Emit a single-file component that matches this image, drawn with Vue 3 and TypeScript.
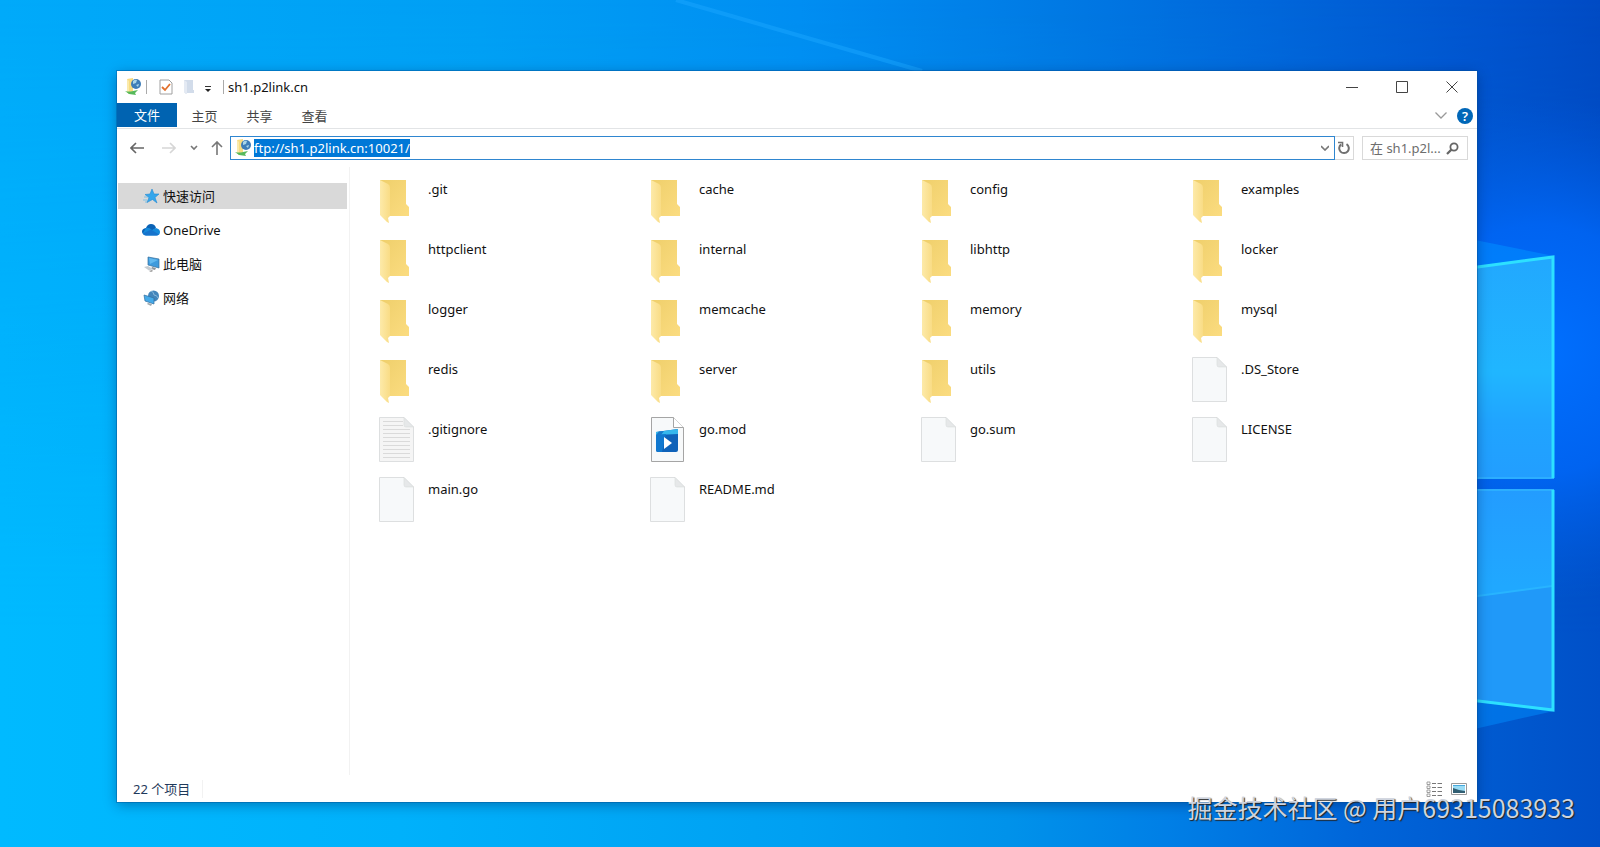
<script setup lang="ts">
import { onMounted, ref } from 'vue'

type Kind = 'folder' | 'file' | 'text' | 'video'
interface Entry {
  name: string
  kind: Kind
}

const folders = [
  '.git', 'cache', 'config', 'examples',
  'httpclient', 'internal', 'libhttp', 'locker',
  'logger', 'memcache', 'memory', 'mysql',
  'redis', 'server', 'utils',
]
const entries: Entry[] = [
  ...folders.map((name): Entry => ({ name, kind: 'folder' })),
  { name: '.DS_Store', kind: 'file' },
  { name: '.gitignore', kind: 'text' },
  { name: 'go.mod', kind: 'video' },
  { name: 'go.sum', kind: 'file' },
  { name: 'LICENSE', kind: 'file' },
  { name: 'main.go', kind: 'file' },
  { name: 'README.md', kind: 'file' },
]

const places = [
  { id: 'quick', label: '快速访问' },
  { id: 'cloud', label: 'OneDrive' },
  { id: 'pc', label: '此电脑' },
  { id: 'net', label: '网络' },
]
const activePlace = ref('quick')
const tabs = ['主页', '共享', '查看']
const address = ref('ftp://sh1.p2link.cn:10021/')
const query = ref('')
const addressBox = ref<HTMLInputElement | null>(null)

onMounted(() => {
  addressBox.value?.focus()
  addressBox.value?.select()
})
</script>

<template>
  <div class="desktop">
    <svg class="wallpaper" viewBox="0 0 1600 847" preserveAspectRatio="none" aria-hidden="true">
      <defs>
        <linearGradient id="skyTop" x1="0" y1="0" x2="1" y2="0">
          <stop offset="0" stop-color="#00aafa" />
          <stop offset="0.3" stop-color="#009ff4" />
          <stop offset="0.5" stop-color="#008ef2" />
          <stop offset="0.65" stop-color="#007be5" />
          <stop offset="0.8" stop-color="#0066da" />
          <stop offset="0.93" stop-color="#0054cf" />
          <stop offset="1" stop-color="#004bc4" />
        </linearGradient>
        <linearGradient id="skyLow" x1="0" y1="0" x2="1" y2="0">
          <stop offset="0" stop-color="#00baff" />
          <stop offset="0.25" stop-color="#00b1fb" />
          <stop offset="0.5" stop-color="#00a0f2" />
          <stop offset="0.63" stop-color="#0092ea" />
          <stop offset="0.73" stop-color="#007fe6" />
          <stop offset="0.85" stop-color="#0065d9" />
          <stop offset="1" stop-color="#0050c8" />
        </linearGradient>
        <linearGradient id="fade" x1="0" y1="0" x2="0" y2="1">
          <stop offset="0" stop-color="#000" />
          <stop offset="0.75" stop-color="#fff" />
        </linearGradient>
        <mask id="lowMask"><rect width="1600" height="847" fill="url(#fade)" /></mask>
        <radialGradient id="rightGlow" gradientUnits="userSpaceOnUse" cx="1540" cy="350" r="250">
          <stop offset="0" stop-color="#0070ff" />
          <stop offset="0.5" stop-color="#0068fa" stop-opacity="0.8" />
          <stop offset="1" stop-color="#0060e8" stop-opacity="0" />
        </radialGradient>
        <linearGradient id="paneTop" x1="0" y1="0" x2="0" y2="1">
          <stop offset="0" stop-color="#22a8fe" />
          <stop offset="0.52" stop-color="#20b6ff" />
          <stop offset="0.75" stop-color="#20a4ff" />
          <stop offset="1" stop-color="#229eff" />
        </linearGradient>
        <linearGradient id="paneLow" x1="0" y1="0" x2="0" y2="1">
          <stop offset="0" stop-color="#239cff" />
          <stop offset="0.44" stop-color="#20a8ff" />
          <stop offset="1" stop-color="#20a8ff" />
        </linearGradient>
        <linearGradient id="folderBack" x1="0" y1="0" x2="1" y2="1">
          <stop offset="0" stop-color="#efcf6b" />
          <stop offset="1" stop-color="#fbdc80" />
        </linearGradient>
        <linearGradient id="folderFront" x1="0" y1="0" x2="1" y2="0">
          <stop offset="0" stop-color="#fdeaa9" />
          <stop offset="1" stop-color="#f9dc85" />
        </linearGradient>
      </defs>
      <rect width="1600" height="847" fill="url(#skyTop)" />
      <rect width="1600" height="847" fill="url(#skyLow)" mask="url(#lowMask)" />
      <rect width="1600" height="847" fill="url(#rightGlow)" />
      <path d="M676 0 L922 71" stroke="#1ba6ff" stroke-width="4" opacity="0.5" />
      <path d="M1470 239 L1554 256 L1470 268Z" fill="#008cff" opacity="0.6" />
      <path d="M1470 700 L1554 711 L1470 730Z" fill="#0084f5" opacity="0.6" />
      <path d="M1470 268 L1554 257 V478 H1470Z" fill="url(#paneTop)" />
      <path d="M1470 489 H1554 V711 L1470 700Z" fill="url(#paneLow)" />
      <path d="M1470 597 L1554 586 V711 L1470 700Z" fill="#2099f9" />
      <path d="M1470 597 L1552 586" stroke="#28b4ff" stroke-width="2" />
      <path d="M1470 478 H1554 M1470 490 H1554" stroke="#2caeff" stroke-width="2" />
      <path d="M1470 268 L1553 257 V478 M1553 490 V710 L1470 700" fill="none" stroke="#2de0ff" stroke-width="3" />
    </svg>

    <main class="window">
      <header class="titlebar">
        <svg class="ftp-icon" viewBox="0 0 18 18" aria-hidden="true">
          <path d="M3 1 L9 0 V13 L5 16 L3 14Z" fill="#f7dc82" />
          <path d="M3 1 L5 3 V16 L3 14Z" fill="#fbeaab" />
          <path d="M1 13 Q5 14 9 13 L14 12 L11 15 L12 17 L5 16Z" fill="#57b95b" />
          <circle cx="12" cy="6" r="5" fill="#3d7db8" />
          <path d="M9 3 Q11 1 13 2 L12 5 L9 6Z M12 7 L15 6 L14 9Z" fill="#a8d5e8" />
        </svg>
        <span class="bar"></span>
        <button class="quick" type="button" aria-label="属性">
          <svg width="14" height="16" viewBox="0 0 14 16">
            <path d="M1 1 H10 L13 4 V15 H1Z" fill="#fff" stroke="#a0a0a0" />
            <path d="M3 8 L6 11 L11 5" fill="none" stroke="#e2702c" stroke-width="1.8" />
          </svg>
        </button>
        <button class="quick folder-quick" type="button" aria-label="新建文件夹">
          <svg width="10" height="14" viewBox="0 0 10 14">
            <path d="M0 0 H9 V10 H10 V13 H3 L2 14 L0 12Z" fill="#d2dcea" />
            <path d="M0 0 L3 2 V14 L0 12Z" fill="#e4eaf3" />
          </svg>
        </button>
        <button class="quick arrow-quick" type="button" aria-label="自定义快速访问工具栏">
          <svg width="8" height="8" viewBox="0 0 8 8"><path d="M1 1.500 H7" stroke="#333" /><path d="M1 4 H7 L4 7Z" fill="#222" /></svg>
        </button>
        <span class="bar title-bar-mark"></span>
        <h1 class="title">sh1.p2link.cn</h1>
        <div class="controls">
          <button type="button" aria-label="最小化"><svg viewBox="0 0 12 12"><path d="M0 6.500 H12" /></svg></button>
          <button type="button" aria-label="最大化"><svg viewBox="0 0 12 12"><path d="M.5 .5 H11.500 V11.500 H.5Z" /></svg></button>
          <button type="button" aria-label="关闭"><svg viewBox="0 0 12 12"><path d="M.5 .5 L11.500 11.500 M11.500 .5 L.5 11.500" /></svg></button>
        </div>
      </header>

      <nav class="ribbon" aria-label="功能区">
        <button class="file-tab" type="button">文件</button>
        <button v-for="tab in tabs" :key="tab" class="tab" type="button">{{ tab }}</button>
        <button class="expand" type="button" aria-label="展开功能区">
          <svg width="12" height="7" viewBox="0 0 12 7"><path d="M.5 .5 L6 6 L11.500 .5" fill="none" stroke="#999" stroke-width="1.3" /></svg>
        </button>
        <button class="help" type="button" aria-label="帮助">?</button>
      </nav>

      <div class="toolbar">
        <button class="nav" type="button" aria-label="后退">
          <svg width="14" height="12" viewBox="0 0 14 12"><path d="M14 6 H1 M6 1 L1 6 L6 11" stroke="#666" /></svg>
        </button>
        <button class="nav forward" type="button" aria-label="前进">
          <svg width="14" height="12" viewBox="0 0 14 12"><path d="M0 6 H13 M8 1 L13 6 L8 11" stroke="#d6d6d6" /></svg>
        </button>
        <button class="nav recent" type="button" aria-label="最近浏览的位置">
          <svg width="8" height="6" viewBox="0 0 8 6"><path d="M1 1 L4 4 L7 1" stroke="#777" /></svg>
        </button>
        <button class="nav" type="button" aria-label="上移">
          <svg width="12" height="14" viewBox="0 0 12 14"><path d="M6 14 V1 M1 6 L6 1 L11 6" stroke="#777" /></svg>
        </button>
        <div class="address">
          <svg class="ftp-icon" viewBox="0 0 18 18" aria-hidden="true">
            <path d="M3 1 L9 0 V13 L5 16 L3 14Z" fill="#f7dc82" />
            <path d="M3 1 L5 3 V16 L3 14Z" fill="#fbeaab" />
            <path d="M1 13 Q5 14 9 13 L14 12 L11 15 L12 17 L5 16Z" fill="#57b95b" />
            <circle cx="12" cy="6" r="5" fill="#3d7db8" />
            <path d="M9 3 Q11 1 13 2 L12 5 L9 6Z M12 7 L15 6 L14 9Z" fill="#a8d5e8" />
          </svg>
          <input ref="addressBox" v-model="address" type="text" aria-label="地址" spellcheck="false" />
          <button class="nav" type="button" aria-label="以前的位置">
            <svg width="8" height="6" viewBox="0 0 8 6"><path d="M0 1 L4 5 L8 1" stroke="#777" /></svg>
          </button>
        </div>
        <button class="refresh" type="button" aria-label="刷新">
          <svg width="12" height="14" viewBox="0 0 12 14">
            <path d="M8.500 3.200 A4.800 4.800 0 1 1 3.200 3.400" fill="none" stroke="#707070" stroke-width="2" />
            <path d="M0 1.500 H4.500 V6" fill="none" stroke="#707070" stroke-width="1.6" />
          </svg>
        </button>
        <label class="search">
          <input v-model="query" type="text" placeholder="在 sh1.p2l..." aria-label="搜索" />
          <svg width="13" height="13" viewBox="0 0 13 13" aria-hidden="true">
            <circle cx="8" cy="5" r="3.6" fill="none" stroke="#666" stroke-width="1.8" />
            <path d="M5.400 7.600 L1 12" stroke="#666" stroke-width="2.2" />
          </svg>
        </label>
      </div>

      <div class="body">
        <nav class="places" aria-label="导航窗格">
          <a
            v-for="place in places"
            :key="place.id"
            href="#"
            :class="{ active: place.id === activePlace }"
            @click.prevent="activePlace = place.id"
          >
            <svg v-if="place.id === 'quick'" viewBox="0 0 18 16" aria-hidden="true">
              <path d="M10 1 L12 6 L17 6 L13 9.500 L15 15 L10.500 11.500 L5 14.500 L7 9.500 L3 6.500 L8 6Z" fill="#35a7ec" stroke="#2489d4" stroke-width=".6" />
              <path d="M2 9 H6 M1 12 H5 M3 14 H5" stroke="#6bb9e6" stroke-width=".8" />
            </svg>
            <svg v-else-if="place.id === 'cloud'" viewBox="0 0 18 16" aria-hidden="true">
              <path d="M3 13 Q0 12 0 9.500 Q0 6.500 4 6 Q5.500 2 9 2 Q13 2 14 6 L10 9Z" fill="#0b62b5" />
              <path d="M4 6 Q7 5 10 8 L14 6 Q18 7 18 10 Q18 13 15 13.500 H4 Q1 13 1 11Z" fill="#168adb" />
              <path d="M1 11.500 L9 7.500 L17 12.500 Q16 13.500 14 13.500 H4 Q2 13.500 1 11.500Z" fill="#1673cc" />
            </svg>
            <svg v-else-if="place.id === 'pc'" viewBox="0 0 18 16" aria-hidden="true">
              <path d="M6 1 L17 3 V12 L6 9Z" fill="#3e9bdd" stroke="#356e9b" stroke-width=".7" />
              <path d="M7 2 L16 4 L8 8Z" fill="#62b9ef" />
              <path d="M10 11 L14 12 L13 14 L9 13Z" fill="#8b9298" />
              <path d="M2 11 L6 10 L11 13 L7 14.500Z" fill="#c6ccd1" />
              <path d="M7 15 L10 14 L11 15 L9 16Z" fill="#999" />
            </svg>
            <svg v-else viewBox="0 0 18 16" aria-hidden="true">
              <circle cx="11.500" cy="6" r="5.500" fill="#4385bb" />
              <path d="M9 1 Q12 2 12 5 Q15 5 16 8" fill="none" stroke="#86b8dc" />
              <path d="M2 5 L12 8 V14 L3 11Z" fill="#45aae9" stroke="#326f9f" stroke-width=".7" />
              <path d="M6 13 L10 14 L9 16 L5 14Z" fill="#9da7ad" />
            </svg>
            <span>{{ place.label }}</span>
          </a>
        </nav>

        <ul class="files">
          <li v-for="entry in entries" :key="entry.name">
            <button type="button">
              <svg v-if="entry.kind === 'folder'" viewBox="0 0 36 48" aria-hidden="true">
                <path d="M1 5 H27 V29 L30 32 V41 H9 L1 38Z" fill="url(#folderBack)" />
                <path d="M1 5 L9 9 Q11 10 11 13 V41 L9 43 L10 48 L8 47 L1 40Z" fill="url(#folderFront)" />
              </svg>
              <svg v-else viewBox="0 0 36 48" aria-hidden="true">
                <path
                  :d="entry.kind === 'video' ? 'M1.500 2.500 H23.500 L33.500 12.500 V46.500 H1.500Z' : 'M.5 2.500 H25 L34.500 12 V46.500 H.5Z'"
                  :fill="entry.kind === 'text' ? '#f5f5f5' : '#f7f9fa'"
                  :stroke="entry.kind === 'video' ? '#a5a5a5' : '#dddfe0'"
                />
                <path v-if="entry.kind === 'video'" d="M23.500 2.500 V12.500 H33.500" fill="#fff" stroke="#a5a5a5" />
                <path v-else d="M25 2.500 V10 Q25 12 27 12 H34.500Z" fill="#e6e8e9" stroke="#d9dbdc" stroke-width=".6" />
                <path
                  v-if="entry.kind === 'text'"
                  d="M4 6.500 H24 M4 10.500 H24 M4 14.500 H31 M4 18.500 H31 M4 22.500 H31 M4 26.500 H31 M4 30.500 H31 M4 34.500 H31 M4 38.500 H31 M4 42.500 H31"
                  stroke="#dadada"
                />
                <g v-if="entry.kind === 'video'">
                  <path d="M6 17 L28 14 V35 Q28 37 26 37 H8 Q6 37 6 35Z" fill="#0f62b9" />
                  <path d="M6 17 L28 14 V19 L6 20Z" fill="#35b7ed" />
                  <path d="M16 19 L12 37 H8 Q6 37 6 35 V20Z" fill="#1178cf" />
                  <path d="M9 16.600 L14 16 L11 20 L6 20Z" fill="#1679cb" />
                  <path d="M14 22 L22 28 L14 34Z" fill="#fff" />
                </g>
              </svg>
              <span>{{ entry.name }}</span>
            </button>
          </li>
        </ul>
      </div>

      <footer class="status">
        <span class="count">22 个项目</span>
        <button type="button" aria-label="详细信息">
          <svg width="16" height="16" viewBox="0 0 16 16">
            <path d="M1 1 H4 V3.500 H1Z M1 5 H4 V7.500 H1Z M1 9 H4 V11.500 H1Z M1 13 H4 V15.500 H1Z" fill="#fff" stroke="#8a8a8a" stroke-width=".8" />
            <path d="M6 2.500 H10 M11.500 2.500 H16 M6 6.500 H10 M11.500 6.500 H16 M6 10.500 H10 M11.500 10.500 H16 M6 14.500 H10 M11.500 14.500 H16" stroke="#777" />
          </svg>
        </button>
        <button type="button" aria-label="大缩略图">
          <svg width="16" height="12" viewBox="0 0 16 12">
            <path d="M.5 .5 H15.500 V11.500 H.5Z" fill="#fff" stroke="#999" />
            <path d="M2 2 H14 V10 H2Z" fill="#9adcf5" />
            <path d="M2 5 L8 7 L14 8 V10 H2Z" fill="#315e72" />
            <path d="M2 2 H14 V3 H2Z" fill="#47a9dd" />
          </svg>
        </button>
      </footer>
    </main>

    <p class="credit">掘金技术社区 @ 用户69315083933</p>
  </div>
</template>

<style>
html,
body {
  margin: 0;
}
</style>

<style scoped>
.desktop {
  position: relative;
  display: flex;
  box-sizing: border-box;
  min-height: 100vh;
  padding: 71px 123px 45px 117px;
  overflow: hidden;
  font: 13px/18px "Noto Sans", "Noto Sans CJK SC", sans-serif;
  color: #111;
}
.wallpaper {
  position: absolute;
  inset: 0;
  width: 100%;
  height: 100%;
}
button {
  display: flex;
  align-items: center;
  justify-content: center;
  padding: 0;
  border: 0;
  background: none;
  color: inherit;
  font: inherit;
}
input {
  min-width: 0;
  padding: 0;
  border: 0;
  outline: 0;
  background: none;
  color: #111;
  font: inherit;
}
svg {
  flex: none;
}
.window {
  position: relative;
  display: flex;
  flex: 1;
  flex-direction: column;
  min-width: 0;
  background: #fff;
  box-shadow: 0 0 0 1px rgba(0, 80, 150, 0.4), 0 3px 12px rgba(0, 30, 80, 0.4);
}
.titlebar {
  display: flex;
  align-items: center;
  height: 32px;
  padding-left: 7px;
}
.ftp-icon {
  width: 18px;
  height: 18px;
}
.bar {
  width: 1px;
  height: 14px;
  margin: 0 12px 0 4px;
  background: #aaa;
}
.quick {
  height: 24px;
}
.folder-quick {
  margin: 0 10px 0 11px;
}
.arrow-quick {
  align-items: flex-end;
}
.title-bar-mark {
  margin: 0 4px 0 11px;
}
.title {
  margin: 0;
  font-size: 13px;
  font-weight: 400;
}
.controls {
  display: flex;
  align-self: stretch;
  margin-left: auto;
}
.controls button {
  width: 50px;
}
.controls svg {
  width: 12px;
  height: 12px;
  fill: none;
  stroke: #444;
}
.arrow-quick svg {
  padding-bottom: 6px;
}
.ribbon {
  display: flex;
  height: 25px;
  border-bottom: 1px solid #e2e4e6;
}
.file-tab {
  width: 60px;
  height: 24px;
  background: #0063b1;
  color: #fff;
}
.tab {
  width: 55px;
  color: #444;
}
.expand {
  margin-left: auto;
}
.help {
  align-self: center;
  width: 16px;
  height: 16px;
  margin: 0 4px 0 10px;
  border-radius: 50%;
  background: #0067b8;
  color: #fff;
  font-weight: 600;
}
.toolbar {
  display: flex;
  align-items: center;
  height: 24px;
  padding: 7px 9px 7px 13px;
}
.nav path {
  fill: none;
  stroke-width: 1.6;
}
.forward {
  margin: 0 14px 0 18px;
}
.recent {
  margin-right: 13px;
}
.address {
  display: flex;
  flex: 1;
  align-items: center;
  box-sizing: border-box;
  height: 24px;
  margin-left: 7px;
  padding: 0 5px 0 3px;
  border: 1px solid #2f86d0;
}
.address input {
  flex: 1;
  height: 18px;
  margin-left: 2px;
}
.address input::selection {
  background: #0078d7;
  color: #fff;
}
.refresh {
  box-sizing: border-box;
  width: 19px;
  height: 24px;
  border: 1px solid #d9d9d9;
  border-left: 0;
}
.search {
  display: flex;
  align-items: center;
  box-sizing: border-box;
  width: 106px;
  height: 24px;
  margin-left: 8px;
  padding: 0 8px 0 7px;
  border: 1px solid #d9d9d9;
}
.search input {
  flex: 1;
}
.search input::placeholder {
  color: #6d6d6d;
  opacity: 1;
}
.body {
  display: flex;
  flex: 1;
}
.places {
  display: flex;
  flex-direction: column;
  gap: 8px;
  box-sizing: border-box;
  width: 233px;
  padding: 16px 2px 0 1px;
  border-right: 1px solid #f2f2f2;
}
.places a {
  display: flex;
  align-items: center;
  gap: 3px;
  height: 26px;
  padding-left: 24px;
  color: #111;
  text-decoration: none;
}
.places a.active {
  background: #d9d9d9;
}
.places svg {
  width: 18px;
  height: 16px;
}
.files {
  display: grid;
  flex: 1;
  grid-template-columns: repeat(4, 1fr);
  grid-auto-rows: 60px;
  margin: 0;
  padding: 8px 14px 0 29px;
  list-style: none;
}
.files button {
  align-items: flex-start;
  justify-content: flex-start;
  gap: 13px;
}
.files svg {
  width: 36px;
  height: 48px;
}
.files span {
  padding-top: 5px;
}
.status {
  display: flex;
  align-items: center;
  gap: 9px;
  height: 27px;
  padding: 0 10px 0 16px;
}
.count {
  margin-right: auto;
  padding-right: 12px;
  border-right: 1px solid #f2f2f2;
  color: #1e395b;
}
.credit {
  position: absolute;
  right: 25px;
  bottom: 22px;
  margin: 0;
  color: #cfd4de;
  font: 25px/36px "Noto Sans CJK SC", sans-serif;
  text-shadow: 1px 1px 1px #222;
}
</style>
